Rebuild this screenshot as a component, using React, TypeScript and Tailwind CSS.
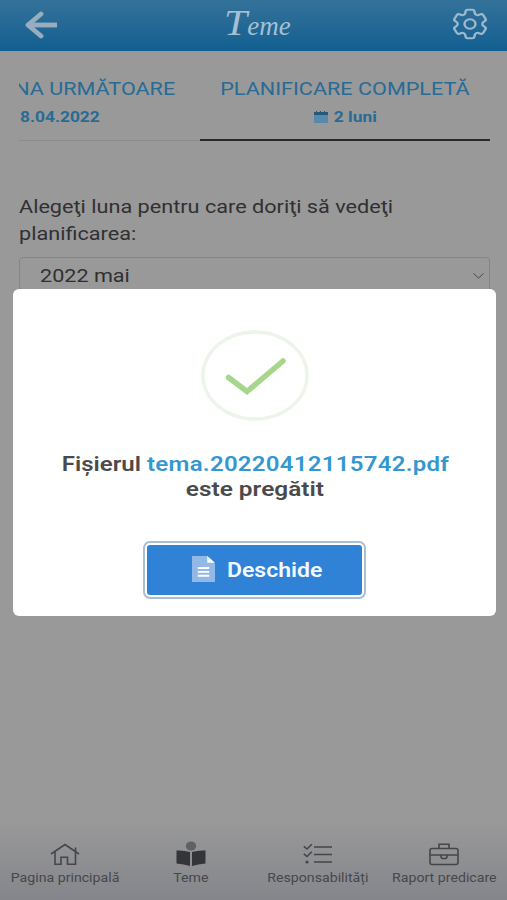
import React from "react"
import { HiOutlineCog6Tooth } from "react-icons/hi2"

const navItems = [
  { label: "Pagina principală", icon: <HomeIcon /> },
  { label: "Teme", icon: <ReaderIcon /> },
  { label: "Responsabilități", icon: <ChecklistIcon /> },
  { label: "Raport predicare", icon: <BriefcaseIcon /> },
]

function HomeIcon() {
  return (
    <svg width="30" height="24" viewBox="0 0 30 24" fill="none" stroke="#45464a" strokeWidth="1.6">
      <path d="M1 11 15 1.500l14 9.500M5 9v12.300h6v-7h6.500v7H25.500V9M25.500 8.500V4.500" />
    </svg>
  )
}

function ReaderIcon() {
  return (
    <svg width="30" height="26" viewBox="0 0 30 26">
      <ellipse cx="15" cy="5" rx="5.2" ry="4.6" fill="#606164" />
      <path d="M0.5 9.500q7-.5 13.500 1.500v14q-6-2-13.500-2.500zM29.500 9.500q-7-.5-13.500 1.500v14q6-2 13.500-2.500z" fill="#343538" />
    </svg>
  )
}

function ChecklistIcon() {
  return (
    <svg width="30" height="24" viewBox="0 0 30 24" fill="none" stroke="#45464a" strokeWidth="1.6">
      <path d="M11 4h18M11 11.500h18M11 19h18M.8 3.300 4 6l4.800-4.700M.8 10.800 4 13.500l4.800-4.700" />
      <circle cx="4" cy="19" r="1.600" fill="#45464a" stroke="none" />
    </svg>
  )
}

function BriefcaseIcon() {
  return (
    <svg width="30" height="24" viewBox="0 0 30 24" fill="none" stroke="#45464a" strokeWidth="1.6">
      <rect x="1" y="5.500" width="28" height="16" rx="2" />
      <path d="M10 5.500V1.200h10v4.300M1 12h28M12 12v2l1 1.500h4l1-1.500v-2" />
    </svg>
  )
}

function Header() {
  return (
    <header className="grid h-[51px] grid-cols-[60px_1fr_66px] items-center bg-linear-to-b from-[#34729a] to-[#0f5f91]">
      <svg className="-mt-px ml-6" width="34" height="28" viewBox="0 0 34 28" fill="none" stroke="#98aebf" strokeWidth="4.8">
        <path d="M17 3 4 14l13 11" strokeLinecap="round" strokeLinejoin="round" />
        <path d="M4 14h29" />
      </svg>
      <h1 className="flex h-[46px] items-baseline justify-center pl-[17px] font-['Liberation_Serif',serif] text-[27px] italic leading-[40px] text-[#a5c0d2]">
        <span className="origin-right scale-x-[1.15] text-[36px]">T</span>eme
      </h1>
      <HiOutlineCog6Tooth className="-mt-[3px] ml-[7px] h-[38px] w-[44px]" color="#9db9cc" strokeWidth={1.3} preserveAspectRatio="none" />
    </header>
  )
}

function Tabs() {
  return (
    <div className="ml-[19px] mr-[17px] mt-[27px] flex h-[63px] overflow-hidden text-[#286b94]">
      <div className="flex w-[181px] flex-col border-b border-[#8c8c8c] pt-px">
        <div className="flex justify-end pr-[25px] text-[18px] leading-5">
          <span className="origin-right scale-x-[1.2] whitespace-nowrap">NA URMĂTOARE</span>
        </div>
        <div className="mt-2 pl-px text-sm font-bold leading-5">
          <span className="inline-block origin-left scale-x-[1.24]">8.04.2022</span>
        </div>
      </div>
      <div className="flex flex-1 flex-col items-center border-b-2 border-[#29292b] pt-px">
        <span className="scale-x-[1.2] whitespace-nowrap text-[18px] leading-5">PLANIFICARE COMPLETĂ</span>
        <div className="mt-2 flex items-center gap-[10px] pr-[3px] text-sm font-bold leading-5">
          <svg width="14" height="12" viewBox="0 0 14 12">
            <path d="M0 3h14v9H0z" fill="#5789ad" />
            <path d="M0 1h2V0h1v1h3V0h1v1h3V0h1v1h3v3H0z" fill="#24597b" />
          </svg>
          <span className="scale-x-[1.24]">2 luni</span>
        </div>
      </div>
    </div>
  )
}

function ReadyDialog() {
  return (
    <div className="absolute left-[13px] top-[289px] flex h-[327px] w-[483px] flex-col items-center rounded-[6px] bg-white">
      <svg className="mt-10" width="110" height="93" viewBox="0 0 110 93" fill="none">
        <ellipse cx="55" cy="46.500" rx="52" ry="43.500" stroke="#edf5eb" strokeWidth="3.500" />
        <path d="M28.500 48.500 47 62.500 83 32" stroke="#a5d68b" strokeWidth="5.500" strokeLinecap="round" />
      </svg>
      <h2 className="mt-[30px] text-center text-[20px] font-semibold leading-[25px] text-[#4a4a4c]">
        <span className="block scale-x-[1.2] whitespace-nowrap pl-px">
          Fișierul <span className="tracking-[0.23px] text-[#3498d0]">tema.20220412115742.pdf</span>
        </span>
        <span className="block scale-x-[1.22]">este pregătit</span>
      </h2>
      <button className="mt-[43px] flex h-[50px] w-[215px] items-center justify-center rounded-[3px] bg-[#2f82d6] pr-[7px] text-[20px] font-semibold text-[#f5faff] ring-2 ring-[#a9bfd2] ring-offset-2">
        <svg className="mb-[3px] mr-3" width="23" height="26" viewBox="0 0 24 27">
          <path d="M0 0h16l8 8v19H0z" fill="#92b8e8" />
          <path d="M16 0v7h8z" fill="#fff" />
          <path d="M6 12.500h12M6 16.500h12M6 20.500h12" stroke="#fff" strokeWidth="2" />
        </svg>
        <span className="origin-left scale-x-[1.15]">Deschide</span>
      </button>
    </div>
  )
}

export default function App() {
  return (
    <div className="relative flex h-[900px] w-full flex-col overflow-hidden bg-[#999] font-['Roboto',sans-serif]">
      <Header />
      <Tabs />
      <main className="flex-1 pl-[19px] pr-[17px] pt-[52px] text-[18px] text-[#303032]">
        <p className="origin-left scale-x-[1.203] whitespace-nowrap leading-[27px]">
          Alegeţi luna pentru care doriţi să vedeţi
          <br />
          planificarea:
        </p>
        <div className="mt-[10px] flex h-[42px] items-center justify-between rounded-[4px] border border-[#858585] pb-[5px] pl-5 pr-[5px]">
          <span className="origin-left scale-x-[1.2]">2022 mai</span>
          <svg width="11" height="6" viewBox="0 0 11 6" fill="none" stroke="#48484a">
            <path d="M.5.500 5.500 5l5-4.500" />
          </svg>
        </div>
      </main>
      <nav className="grid h-[80px] grid-cols-4 bg-linear-to-b from-[#999] to-[#85868b] pl-[2px]">
        {navItems.map((item) => (
          <div key={item.label} className="flex flex-col items-center text-[12px] text-[#46474b]">
            <div className="flex h-[47px] items-end">{item.icon}</div>
            <span className="mt-[3px] scale-x-[1.18] whitespace-nowrap leading-4">{item.label}</span>
          </div>
        ))}
      </nav>
      <ReadyDialog />
    </div>
  )
}
